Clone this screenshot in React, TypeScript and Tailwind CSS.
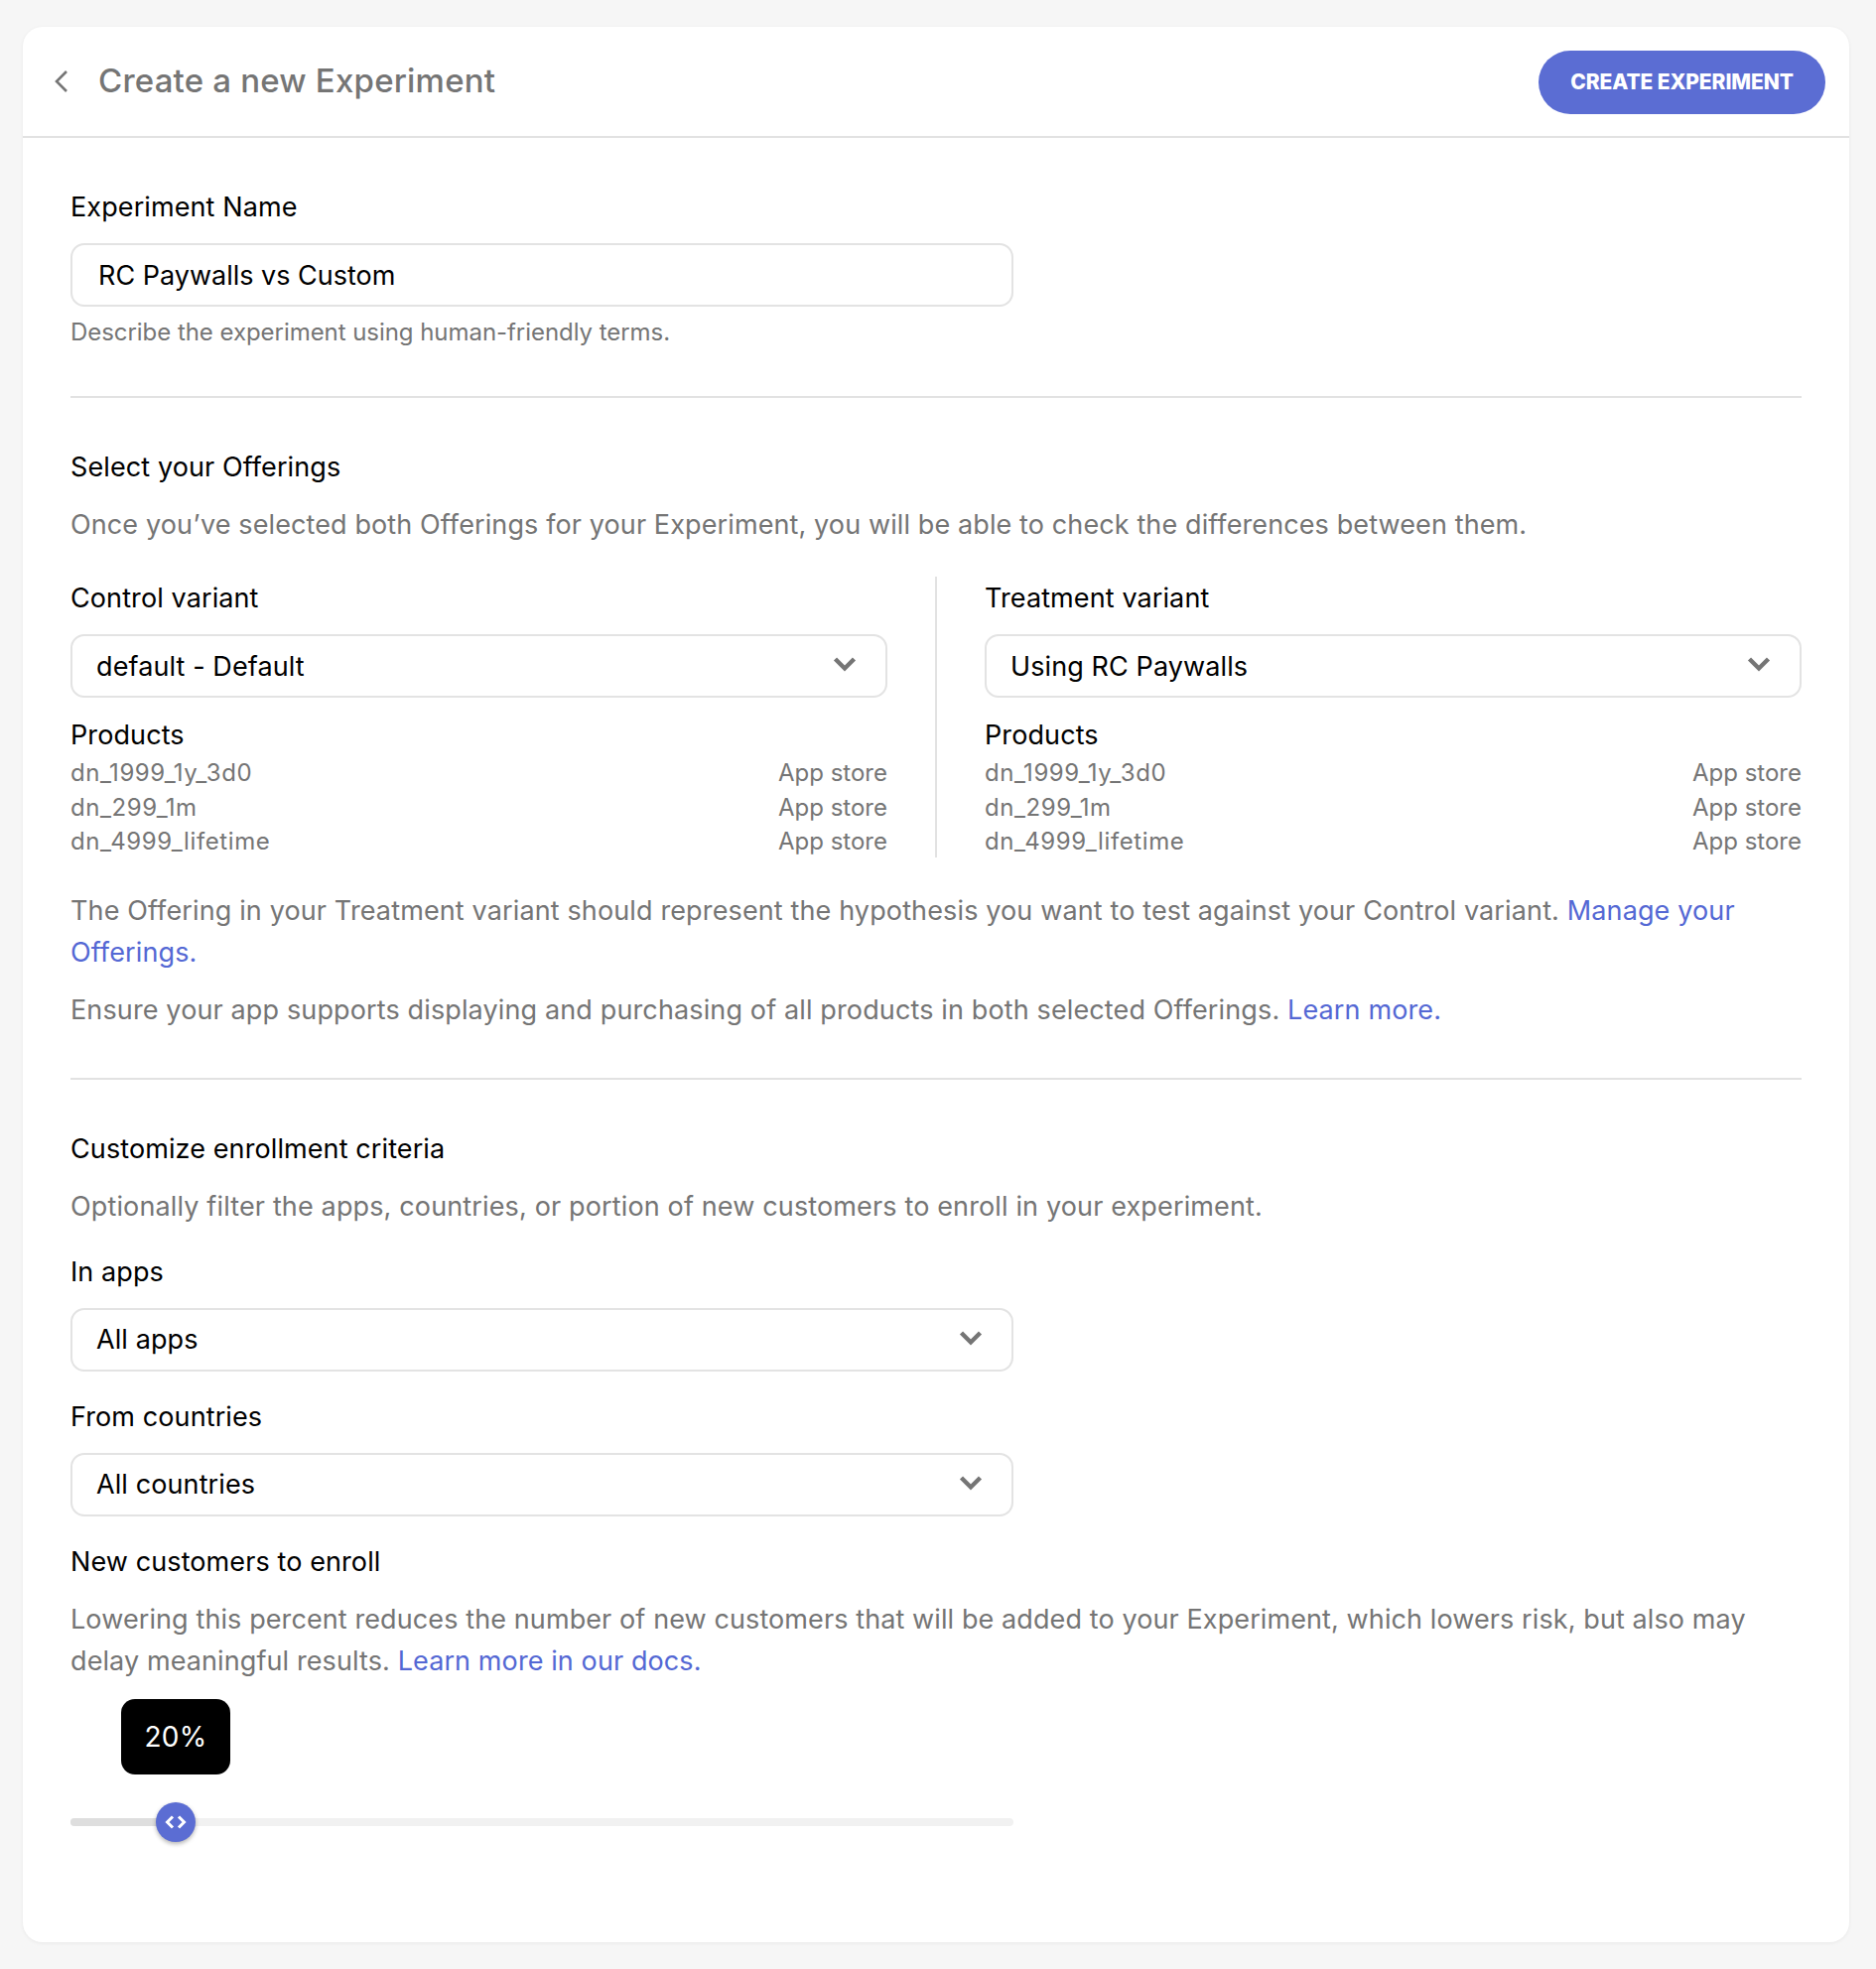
const products = ["dn_1999_1y_3d0", "dn_299_1m", "dn_4999_lifetime"];

function Select({ value }: { value: string }) {
  return (
    <div className="flex h-[64px] items-center justify-between rounded-[14px] border-2 border-[#e3e3e3] pl-[24px] pr-[29px] text-[27px] tracking-[0.1px] text-black">
      <span className="pt-[2px]">{value}</span>
      <svg width="24" height="16" viewBox="0 0 24 16" fill="none" stroke="#757575" strokeWidth="4.4" className="mb-[4px]">
        <path d="M2.5 3 L12 12.5 L21.5 3" />
      </svg>
    </div>
  );
}

function Variant({ label, value }: { label: string; value: string }) {
  return (
    <div className="flex-1">
      <div className="flex h-[44px] items-center text-[27px] tracking-[0.1px] text-black">{label}</div>
      <div className="mt-[14px]">
        <Select value={value} />
      </div>
      <div className="mt-[18px] flex h-[40px] items-center text-[27px] tracking-[0.1px] text-black">Products</div>
      <div className="mt-[1px] text-[24px] leading-[34.5px] text-[#757575]">
        {products.map((p) => (
          <div key={p} className="flex justify-between">
            <span className="tracking-[0.6px]">{p}</span>
            <span>App store</span>
          </div>
        ))}
      </div>
    </div>
  );
}

export default function App() {
  return (
    <div className="min-h-[1984px] bg-[#f6f6f6] pl-[23px] pr-[27px] pt-[27px] font-['Inter',sans-serif]">
      <div className="h-[1930px] rounded-[20px] bg-white shadow-[0_1px_4px_rgba(0,0,0,0.06)]">
        <div className="flex h-[112px] items-center justify-between border-b-2 border-[#e2e2e2] pl-[31px] pr-[24px]">
          <div className="flex items-center">
            <svg width="16" height="24" viewBox="0 0 16 24" fill="none" stroke="#757575" strokeWidth="2.6">
              <path d="M13 2 L3 12 L13 22" />
            </svg>
            <h1 className="ml-[29px] text-[33px] font-medium tracking-[0.2px] text-[#757575]">Create a new Experiment</h1>
          </div>
          <button className="mt-[2px] h-[64px] w-[289px] rounded-full bg-[#5b6dd3] text-[21px] font-extrabold tracking-[-0.1px] text-white">
            CREATE EXPERIMENT
          </button>
        </div>

        <div className="px-[48px]">
          <div className="mt-[50px] flex h-[40px] items-center text-[27px] tracking-[0.1px] text-black">Experiment Name</div>
          <div className="mt-[16px] flex h-[64px] w-[950px] items-center rounded-[14px] border-2 border-[#e3e3e3] pl-[26px] text-[27px] text-black">
            <span className="pt-[3px]">RC Paywalls vs Custom</span>
          </div>
          <p className="mt-[8px] text-[24px] tracking-[-0.05px] text-[#757575]">Describe the experiment using human-friendly terms.</p>
          <div className="mt-[46px] h-[2px] bg-[#e2e2e2]" />

          <div className="mt-[50px] flex h-[40px] items-center text-[27px] tracking-[0.1px] text-black">Select your Offerings</div>
          <p className="mt-[17px] text-[27px] leading-[42px] tracking-[0.11px] text-[#757575]">
            Once you’ve selected both Offerings for your Experiment, you will be able to check the differences between them.
          </p>

          <div className="mt-[31px] flex gap-[48px]">
            <Variant label="Control variant" value="default - Default" />
            <div className="mb-[2px] w-[2px] bg-[#e2e2e2]" />
            <Variant label="Treatment variant" value="Using RC Paywalls" />
          </div>

          <p className="mt-[31px] text-[27px] leading-[42px] tracking-[0.13px] text-[#757575]">
            The Offering in your Treatment variant should represent the hypothesis you want to test against your Control variant.{" "}
            <a className="text-[#5468d4]">Manage your Offerings.</a>
          </p>
          <p className="mt-[16px] text-[27px] leading-[42px] tracking-[0.13px] text-[#757575]">
            Ensure your app supports displaying and purchasing of all products in both selected Offerings.{" "}
            <a className="text-[#5468d4]">Learn more.</a>
          </p>
          <div className="mt-[47px] h-[2px] bg-[#e2e2e2]" />

          <div className="mt-[51px] flex h-[40px] items-center text-[27px] tracking-[0.1px] text-black">Customize enrollment criteria</div>
          <p className="mt-[16px] text-[27px] leading-[42px] tracking-[0.14px] text-[#757575]">
            Optionally filter the apps, countries, or portion of new customers to enroll in your experiment.
          </p>

          <div className="w-[950px]">
            <div className="mt-[26px] flex h-[40px] items-center text-[27px] tracking-[0.1px] text-black">In apps</div>
            <div className="mt-[15px]">
              <Select value="All apps" />
            </div>
            <div className="mt-[27px] flex h-[40px] items-center text-[27px] tracking-[0.1px] text-black">From countries</div>
            <div className="mt-[15px]">
              <Select value="All countries" />
            </div>
            <div className="mt-[27px] flex h-[40px] items-center text-[27px] tracking-[0.1px] text-black">New customers to enroll</div>
          </div>
          <p className="mt-[16px] text-[27px] leading-[42px] tracking-[0.1px] text-[#757575]">
            Lowering this percent reduces the number of new customers that will be added to your Experiment, which lowers risk, but also may delay meaningful results.{" "}
            <a className="text-[#5468d4]">Learn more in our docs.</a>
          </p>

          <div className="relative mt-[17px] h-[130px] w-[950px]">
            <div className="absolute left-[51px] top-0 flex h-[76px] w-[110px] items-center justify-center rounded-[14px] bg-black text-[28px] tracking-[0.3px] text-white">
              20%
            </div>
            <div className="absolute left-0 right-0 top-[120px] h-[8px] rounded-full bg-[#f1f1f1]">
              <div className="h-full w-[106px] rounded-l-full bg-[#dedede]" />
            </div>
            <div className="absolute left-[86px] top-[104px] flex h-[40px] w-[40px] items-center justify-center rounded-full bg-[#5b6dd3] shadow-[0_2px_4px_rgba(0,0,0,0.3)]">
              <svg width="22" height="14" viewBox="0 0 22 14" fill="none" stroke="white" strokeWidth="3">
                <path d="M8 1.5 L2.5 7 L8 12.5" />
                <path d="M14 1.5 L19.5 7 L14 12.5" />
              </svg>
            </div>
          </div>
        </div>
      </div>
    </div>
  );
}
